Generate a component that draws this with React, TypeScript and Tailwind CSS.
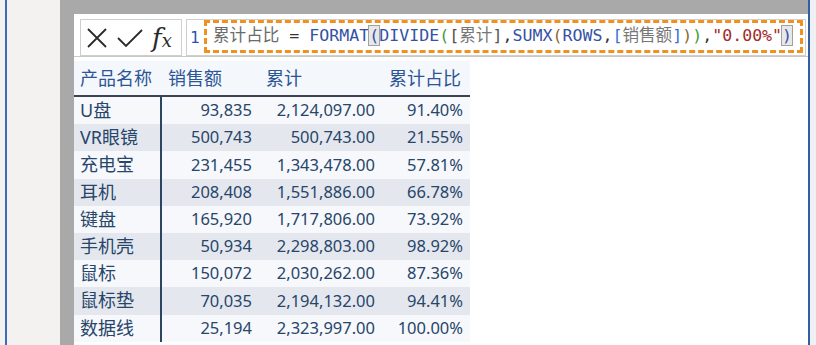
import React from "react";

const rows: [string, string, string, string][] = [
  ["U盘", "93,835", "2,124,097.00", "91.40%"],
  ["VR眼镜", "500,743", "500,743.00", "21.55%"],
  ["充电宝", "231,455", "1,343,478.00", "57.81%"],
  ["耳机", "208,408", "1,551,886.00", "66.78%"],
  ["键盘", "165,920", "1,717,806.00", "73.92%"],
  ["手机壳", "50,934", "2,298,803.00", "98.92%"],
  ["鼠标", "150,072", "2,030,262.00", "87.36%"],
  ["鼠标垫", "70,035", "2,194,132.00", "94.41%"],
  ["数据线", "25,194", "2,323,997.00", "100.00%"],
];

const mono = { fontFamily: '"DejaVu Sans Mono", "Noto Sans CJK SC", monospace' };
const cjk = '"Noto Sans", "Noto Sans CJK SC", sans-serif';

export default function App() {
  return (
    <div className="w-[816px] h-[345px] flex overflow-hidden bg-[#f3f2f1]">
      {/* left light area with blue line */}
      <div className="w-[60px] h-full flex">
        <div className="w-[5px]" />
        <div className="w-[2px] h-full bg-[#3a6fb5]" />
      </div>
      {/* gray frame */}
      <div className="w-[748px] h-full bg-[#a9a9a9] pt-[14px] pl-[14px]">
        <div className="w-full h-full bg-white flex flex-col">
          {/* formula bar */}
          <div className="flex items-stretch pt-[5px] pl-[6px] pr-[2px] h-[43px] border-b border-[#c8c8c8]">
            <div className="w-[102px] h-[37px] border border-[#cfcfcf] bg-white flex items-center pl-[5px] gap-[9px]">
              <svg width="22" height="22" viewBox="0 0 22 22" className="shrink-0">
                <path d="M2 2 L20 20 M20 2 L2 20" stroke="#2a2a2a" strokeWidth="1.8" fill="none" />
              </svg>
              <svg width="26" height="20" viewBox="0 0 26 20" className="shrink-0">
                <path d="M1 10 L9 18 L25 2" stroke="#2a2a2a" strokeWidth="1.8" fill="none" />
              </svg>
              <span
                className="italic text-[#2a2a2a] leading-none whitespace-nowrap"
                style={{ fontFamily: '"DejaVu Serif", serif' }}
              >
                <span className="text-[26px] font-light">f</span>
                <span className="text-[18px]">x</span>
              </span>
            </div>
            <div className="ml-[4px] flex-1 h-[37px] border border-[#cfcfcf] bg-white flex items-center pl-[3px]">
              <span className="text-[16px] text-[#2b55b0] w-[14px]" style={mono}>1</span>
              <div className="flex-1 h-[33px] -mt-[2px] mr-[2px] border-[3px] border-dashed border-[#f0901e] flex items-center pl-[6px]">
                <span className="whitespace-pre text-[16.6px]" style={mono}>
                  <span className="text-[#6a6a6a]">累计占比</span>
                  <span className="text-[#333]">{" = "}</span>
                  <span className="text-[#3551a5]">FORMAT</span>
                  <span className="text-[#3551a5] bg-[#e8e8e8] outline outline-1 outline-[#a0a0a0]">(</span>
                  <span className="text-[#3551a5]">DIVIDE</span>
                  <span className="text-[#3f9a3f]">(</span>
                  <span className="text-[#555]">[</span>
                  <span className="text-[#777]">累计</span>
                  <span className="text-[#555]">]</span>
                  <span className="text-[#333]">,</span>
                  <span className="text-[#3551a5]">SUMX</span>
                  <span className="text-[#8c6a2c]">(</span>
                  <span className="text-[#3551a5]">ROWS</span>
                  <span className="text-[#333]">,</span>
                  <span className="text-[#3b6fd6]">[</span>
                  <span className="text-[#777]">销售额</span>
                  <span className="text-[#3b6fd6]">]</span>
                  <span className="text-[#8c6a2c]">)</span>
                  <span className="text-[#3f9a3f]">)</span>
                  <span className="text-[#333]">,</span>
                  <span className="text-[#a32a2a]">"0.00%"</span>
                  <span className="text-[#3551a5] bg-[#e8e8e8] outline outline-1 outline-[#a0a0a0]">)</span>
                </span>
              </div>
            </div>
          </div>
          {/* table */}
          <div className="mt-[4px] w-[396px] flex flex-col" style={{ fontFamily: cjk }}>
            <div className="h-[36px] flex items-center bg-[#f4f7fb] border-b-2 border-[#3c4350] text-[18px] text-[#2b5595]">
              <div className="w-[88px] pl-[6px]">产品名称</div>
              <div className="w-[96px] pl-[6px]">销售额</div>
              <div className="w-[123px] pl-[8px]">累计</div>
              <div className="w-[89px] pl-[8px]">累计占比</div>
            </div>
            {rows.map((r, i) => (
              <div
                key={r[0]}
                className={`h-[27.2px] flex items-center text-[#28456a] ${i % 2 === 0 ? "bg-[#f6f8fb]" : "bg-[#e4e8ee]"}`}
              >
                <div className="w-[88px] h-full flex items-center pl-[6px] text-[18px] border-r-2 border-[#2f4463]">{r[0]}</div>
                <div className="w-[96px] text-right pr-[6px] text-[16.5px]">{r[1]}</div>
                <div className="w-[123px] text-right pr-[6px] text-[16.5px]">{r[2]}</div>
                <div className="w-[89px] text-right pr-[7px] text-[16.5px]">{r[3]}</div>
              </div>
            ))}
          </div>
        </div>
      </div>
      {/* right blue line */}
      <div className="w-[2px] h-full bg-[#2f5f9e]" />
      <div className="flex-1 h-full bg-[#eef0f3]" />
    </div>
  );
}
